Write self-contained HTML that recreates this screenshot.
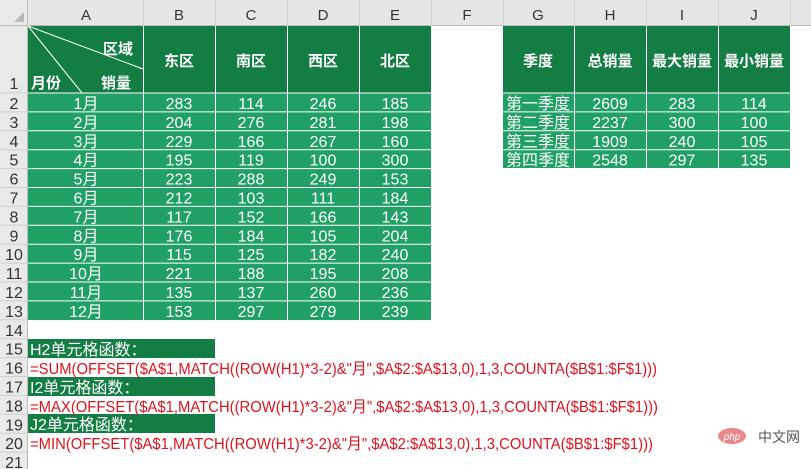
<!DOCTYPE html>
<html><head><meta charset="utf-8"><style>
html,body{margin:0;padding:0;background:#fff;width:811px;height:469px;overflow:hidden}
svg{display:block}
text{font-family:"Liberation Sans","Noto Sans CJK SC",sans-serif}
</style></head><body>
<svg width="811" height="469" viewBox="0 0 811 469" xmlns="http://www.w3.org/2000/svg">
<rect x="0" y="0" width="811" height="26" fill="#e6e6e6"/>
<rect x="0" y="0" width="28" height="469" fill="#e9e9e9"/>
<line x1="0" y1="25.5" x2="811" y2="25.5" stroke="#bdbdbd"/>
<line x1="27.5" y1="0" x2="27.5" y2="469" stroke="#bdbdbd"/>
<polygon points="14,22 24,22 24,12" fill="#b8b8b8"/>
<g stroke="#cfcfcf">
<line x1="143.5" y1="0" x2="143.5" y2="26"/><line x1="215.5" y1="0" x2="215.5" y2="26"/>
<line x1="287.5" y1="0" x2="287.5" y2="26"/><line x1="359.5" y1="0" x2="359.5" y2="26"/>
<line x1="431.5" y1="0" x2="431.5" y2="26"/><line x1="503.5" y1="0" x2="503.5" y2="26"/>
<line x1="574.5" y1="0" x2="574.5" y2="26"/><line x1="646.5" y1="0" x2="646.5" y2="26"/>
<line x1="718.5" y1="0" x2="718.5" y2="26"/><line x1="790.5" y1="0" x2="790.5" y2="26"/>
</g>
<g font-size="15" fill="#333" text-anchor="middle">
<text x="86" y="20">A</text><text x="179" y="20">B</text><text x="251" y="20">C</text><text x="323" y="20">D</text><text x="395" y="20">E</text><text x="467" y="20">F</text><text x="538" y="20">G</text><text x="610" y="20">H</text><text x="682" y="20">I</text><text x="754" y="20">J</text>
</g>
<g font-size="16" fill="#333" text-anchor="middle" id="rn"></g>
<rect x="28" y="26" width="403" height="67" fill="#137d43"/>
<rect x="28" y="93" width="403" height="227" fill="#20a064"/>
<g stroke="#fff" stroke-width="1">
<line x1="143.5" y1="26" x2="143.5" y2="320"/><line x1="215.5" y1="26" x2="215.5" y2="320"/>
<line x1="287.5" y1="26" x2="287.5" y2="320"/><line x1="359.5" y1="26" x2="359.5" y2="320"/>
<line x1="28" y1="93" x2="431" y2="93"/>
<line x1="28" y1="26" x2="143" y2="69"/><line x1="28" y1="26" x2="82" y2="93"/>
</g>
<g fill="#fff" font-size="15" font-weight="bold">
<text x="103" y="54">区域</text><text x="31" y="88">月份</text><text x="101" y="88">销量</text>
</g>
<g fill="#fff" font-size="15" font-weight="bold" text-anchor="middle">
<text x="179" y="66">东区</text><text x="251" y="66">南区</text><text x="323" y="66">西区</text><text x="395" y="66">北区</text>
</g>
<rect x="503" y="26" width="287" height="67" fill="#137d43"/>
<rect x="503" y="93" width="287" height="75" fill="#20a064"/>
<g stroke="#fff">
<line x1="574.5" y1="26" x2="574.5" y2="168"/><line x1="646.5" y1="26" x2="646.5" y2="168"/><line x1="718.5" y1="26" x2="718.5" y2="168"/>
<line x1="503" y1="93" x2="790" y2="93"/>
</g>
<g fill="#fff" font-size="15" font-weight="bold" text-anchor="middle">
<text x="538" y="66">季度</text><text x="610" y="66">总销量</text><text x="682" y="66">最大销量</text><text x="754" y="66">最小销量</text>
</g>
<g id="dat" fill="#fff" font-size="16" text-anchor="middle"></g>
<g stroke="#fff" id="hl"></g>
<rect x="28" y="339" width="187" height="19" fill="#137d43"/>
<rect x="28" y="377" width="187" height="19" fill="#137d43"/>
<rect x="28" y="414" width="187" height="19" fill="#137d43"/>
<g fill="#fff" font-size="16">
<text x="30" y="355">H2单元格函数：</text>
<text x="30" y="393">I2单元格函数：</text>
<text x="30" y="430">J2单元格函数：</text>
</g>
<g fill="#e0141e" font-size="16">
<text x="30" y="374" textLength="627" lengthAdjust="spacingAndGlyphs">=SUM(OFFSET($A$1,MATCH((ROW(H1)*3-2)&amp;"月",$A$2:$A$13,0),1,3,COUNTA($B$1:$F$1)))</text>
<text x="30" y="412" textLength="628" lengthAdjust="spacingAndGlyphs">=MAX(OFFSET($A$1,MATCH((ROW(H1)*3-2)&amp;"月",$A$2:$A$13,0),1,3,COUNTA($B$1:$F$1)))</text>
<text x="30" y="449" textLength="623" lengthAdjust="spacingAndGlyphs">=MIN(OFFSET($A$1,MATCH((ROW(H1)*3-2)&amp;"月",$A$2:$A$13,0),1,3,COUNTA($B$1:$F$1)))</text>
</g>
<ellipse cx="732" cy="436" rx="14" ry="8" fill="#e9888a"/>
<text x="732" y="440" font-size="10" fill="#fff" text-anchor="middle" font-style="italic">php</text>
<text x="758" y="442" font-size="14" fill="#555">中文网</text>
<script>
var ns="http://www.w3.org/2000/svg";
function t(g,x,y,s){var e=document.createElementNS(ns,"text");e.setAttribute("x",x);e.setAttribute("y",y);e.textContent=s;document.getElementById(g).appendChild(e);}
function ry(n){return n==1?26:93+(n-2)*18.9;}
for(var n=1;n<=21;n++){t("rn",14,(n==1?89:ry(n)+16),String(n));
var l=document.createElementNS(ns,"line");var y=(n==1?93:ry(n)+18.9);l.setAttribute("x1",0);l.setAttribute("x2",27);l.setAttribute("y1",y);l.setAttribute("y2",y);l.setAttribute("stroke","#cfcfcf");document.querySelector("svg").appendChild(l);}
var d=[[283,114,246,185],[204,276,281,198],[229,166,267,160],[195,119,100,300],[223,288,249,153],[212,103,111,184],[117,152,166,143],[176,184,105,204],[115,125,182,240],[221,188,195,208],[135,137,260,236],[153,297,279,239]];
var cx=[179,251,323,395];
for(var i=0;i<12;i++){var y=ry(i+2);t("dat",86,y+16,(i+1)+"月");for(var j=0;j<4;j++)t("dat",cx[j],y+16,String(d[i][j]));
if(i>0){var l=document.createElementNS(ns,"line");l.setAttribute("x1",28);l.setAttribute("x2",431);l.setAttribute("y1",y);l.setAttribute("y2",y);document.getElementById("hl").appendChild(l);}}
var q=[["第一季度",2609,283,114],["第二季度",2237,300,100],["第三季度",1909,240,105],["第四季度",2548,297,135]];
var qx=[538,610,682,754];
for(var i=0;i<4;i++){var y=ry(i+2);for(var j=0;j<4;j++)t("dat",qx[j],y+16,String(q[i][j]));
if(i>0){var l=document.createElementNS(ns,"line");l.setAttribute("x1",503);l.setAttribute("x2",790);l.setAttribute("y1",y);l.setAttribute("y2",y);document.getElementById("hl").appendChild(l);}}
</script>
</svg>
</body></html>
